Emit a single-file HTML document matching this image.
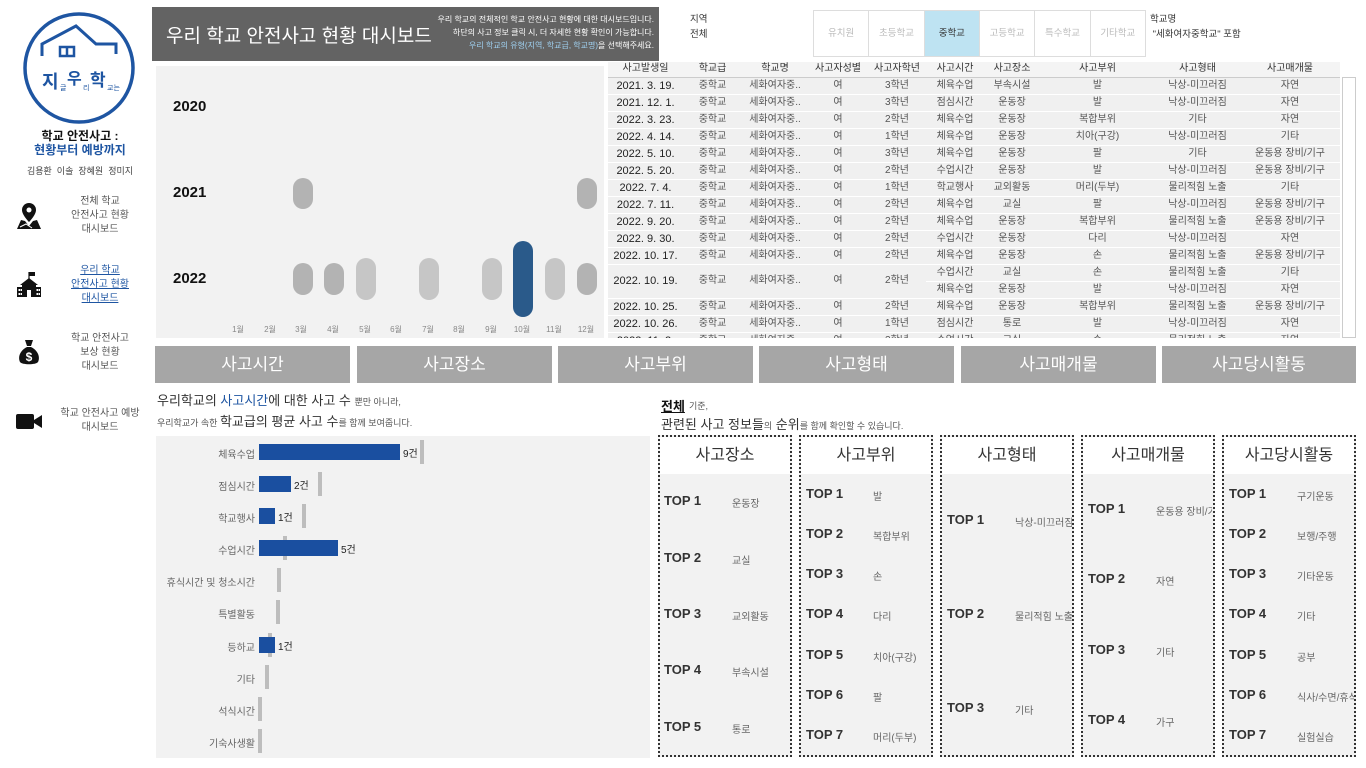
<!DOCTYPE html>
<html><head><meta charset="utf-8">
<style>
*{margin:0;padding:0;box-sizing:border-box}
body{width:1366px;height:768px;background:#fff;position:relative;overflow:hidden;font-family:"Liberation Sans","Noto Sans CJK KR",sans-serif;color:#333}
.a{position:absolute}
.c{text-align:center}
.nav{position:absolute;left:52px;width:96px;text-align:center;font-size:10px;line-height:14px;color:#555}
.tab{position:absolute;top:346px;height:37px;background:#a6a6a6;color:#fff;font-size:17px;line-height:37px;text-align:center}
.pill{position:absolute;width:20px;border-radius:10px}
.mo{position:absolute;top:324px;font-size:8px;color:#888;width:30px;text-align:center}
table{border-collapse:collapse;table-layout:fixed}
td{height:17px;font-size:10px;color:#555;text-align:center;background:#f0f0f0;border-bottom:1px solid #fff;white-space:nowrap;overflow:hidden;padding:0;line-height:16px}
td.d{color:#222;font-size:11px}
th{height:15px;font-size:10px;font-weight:normal;color:#333;background:#f4f4f4;border-bottom:1px solid #ccc;line-height:14px}
.blab{position:absolute;width:100px;left:155px;text-align:right;font-size:10px;color:#666}
.bar{position:absolute;left:259px;height:16px;background:#1a4fa0}
.ref{position:absolute;width:4px;height:24px;background:#bdbdbd}
.cnt{position:absolute;font-size:10px;color:#222}
.box{position:absolute;top:435px;width:134px;height:322px;border:2px dotted #333;background:#f2f2f2}
.box .h{height:37px;background:#fff;text-align:center;font-size:16px;line-height:37px;color:#333}
.t{position:absolute;font-size:13px;font-weight:bold;color:#333}
.v{position:absolute;font-size:10px;color:#666;white-space:nowrap}
</style></head><body>

<!-- Logo -->
<svg class="a" style="left:20px;top:10px" width="120" height="120" viewBox="0 0 120 120">
<circle cx="59" cy="58" r="54" fill="none" stroke="#1e55a2" stroke-width="3.5"/>
<path d="M22 46 L22 34 L56 16 L76 34 L96 34 L96 44" fill="none" stroke="#1e55a2" stroke-width="3"/>
<rect x="40" y="37" width="14" height="9" fill="none" stroke="#1e55a2" stroke-width="2.5"/>
<line x1="47" y1="37" x2="47" y2="46" stroke="#1e55a2" stroke-width="2.5"/>
<text x="22" y="78" font-family="Noto Sans CJK KR" font-weight="bold" font-size="18" fill="#1e55a2">지</text>
<text x="40" y="80" font-family="Noto Sans CJK KR" font-size="7" fill="#1e55a2">글</text>
<text x="47" y="74" font-family="Noto Sans CJK KR" font-weight="bold" font-size="16" fill="#1e55a2">우</text>
<text x="63" y="80" font-family="Noto Sans CJK KR" font-size="7" fill="#1e55a2">리</text>
<text x="70" y="76" font-family="Noto Sans CJK KR" font-weight="bold" font-size="17" fill="#1e55a2">학</text>
<text x="87" y="80" font-family="Noto Sans CJK KR" font-size="7" fill="#1e55a2">교는</text>
</svg>
<div class="a c" style="left:10px;top:127px;width:140px;font-size:12px;font-weight:bold;color:#111">학교 안전사고 :</div>
<div class="a c" style="left:10px;top:141px;width:140px;font-size:12px;font-weight:bold;color:#1e55a2">현황부터 예방까지</div>
<div class="a c" style="left:10px;top:164px;width:140px;font-size:9px;color:#444">김용환 &nbsp;이솔 &nbsp;장혜원 &nbsp;정미지</div>

<!-- nav icons -->
<svg class="a" style="left:16px;top:202px" width="26" height="28" viewBox="0 0 26 28"><path d="M13 1a7 7 0 0 0-7 7c0 5 7 12 7 12s7-7 7-12a7 7 0 0 0-7-7z" fill="#111"/><circle cx="13" cy="8" r="2.5" fill="#fff"/><path d="M1 27 L5 18 L9 19 L13 24 L17 19 L21 18 L25 27 Z" fill="#111"/><path d="M4 25 L10 22 L16 26" stroke="#fff" stroke-width="1" fill="none"/></svg>
<svg class="a" style="left:16px;top:270px" width="26" height="28" viewBox="0 0 26 28"><line x1="13" y1="2" x2="13" y2="10" stroke="#111" stroke-width="1.2"/><rect x="13" y="2" width="6" height="4" fill="#111"/><path d="M4 15 L13 8 L22 15 Z" fill="#111"/><rect x="6" y="14" width="14" height="13" fill="#111"/><rect x="1" y="17" width="6" height="10" fill="#111"/><rect x="19" y="17" width="6" height="10" fill="#111"/><rect x="11" y="20" width="4" height="7" fill="#fff"/><rect x="2.5" y="19" width="1.5" height="2" fill="#fff"/><rect x="4.5" y="19" width="1.5" height="2" fill="#fff"/><rect x="2.5" y="23" width="1.5" height="2" fill="#fff"/><rect x="4.5" y="23" width="1.5" height="2" fill="#fff"/><rect x="20.5" y="19" width="1.5" height="2" fill="#fff"/><rect x="22.5" y="19" width="1.5" height="2" fill="#fff"/><rect x="20.5" y="23" width="1.5" height="2" fill="#fff"/><rect x="22.5" y="23" width="1.5" height="2" fill="#fff"/></svg>
<svg class="a" style="left:17px;top:338px" width="24" height="28" viewBox="0 0 24 28"><path d="M8 2 L16 2 L14 8 L10 8 Z" fill="#111"/><path d="M10 9 C2 13 1 20 3 24 C5 27 19 27 21 24 C23 20 22 13 14 9 Z" fill="#111"/><text x="12" y="23" text-anchor="middle" font-size="12" font-weight="bold" fill="#fff" font-family="Liberation Sans">$</text></svg>
<svg class="a" style="left:15px;top:412px" width="28" height="20" viewBox="0 0 28 20"><rect x="1" y="2" width="18" height="15" rx="2" fill="#111"/><path d="M19 8 L27 3 L27 16 L19 11 Z" fill="#111"/></svg>
<div class="nav" style="top:195px">전체 학교<br>안전사고 현황<br>대시보드</div>
<div class="nav" style="top:264px;color:#1e55a2;text-decoration:underline">우리 학교<br>안전사고 현황<br>대시보드</div>
<div class="nav" style="top:332px">학교 안전사고<br>보상 현황<br>대시보드</div>
<div class="nav" style="top:407px">학교 안전사고 예방<br>대시보드</div>

<!-- header -->
<div class="a" style="left:152px;top:7px;width:507px;height:54px;background:#636363"></div>
<div class="a" style="left:166px;top:21px;font-size:19px;color:#fff;white-space:nowrap">우리 학교 안전사고 현황 대시보드</div>
<div class="a" style="left:430px;top:13px;width:224px;text-align:right;font-size:8px;line-height:13px;color:#fff;white-space:nowrap">우리 학교의 전체적인 학교 안전사고 현황에 대한 대시보드입니다.<br>하단의 사고 정보 클릭 시, 더 자세한 현황 확인이 가능합니다.<br><span style="color:#9fd0f0">우리 학교의 유형(지역, 학교급, 학교명)</span>을 선택해주세요.</div>
<div class="a" style="left:690px;top:12px;font-size:9.5px;line-height:15px;color:#333">지역<br>전체</div>
<div class="a" style="left:813px;top:10px;width:333px;height:47px;border:1px solid #ddd;display:flex">
<div style="flex:1;border-right:1px solid #ddd;font-size:9.5px;color:#bbb;text-align:center;line-height:45px">유치원</div>
<div style="flex:1;border-right:1px solid #ddd;font-size:9.5px;color:#bbb;text-align:center;line-height:45px">초등학교</div>
<div style="flex:1;border-right:1px solid #ddd;font-size:9.5px;color:#333;background:#bee3f2;text-align:center;line-height:45px">중학교</div>
<div style="flex:1;border-right:1px solid #ddd;font-size:9.5px;color:#bbb;text-align:center;line-height:45px">고등학교</div>
<div style="flex:1;border-right:1px solid #ddd;font-size:9.5px;color:#bbb;text-align:center;line-height:45px">특수학교</div>
<div style="flex:1;font-size:9.5px;color:#bbb;text-align:center;line-height:45px">기타학교</div>
</div>
<div class="a" style="left:1150px;top:12px;font-size:9.5px;line-height:15px;color:#333">학교명<br>&nbsp;"세화여자중학교" 포함</div>

<!-- timeline -->
<div class="a" style="left:156px;top:66px;width:448px;height:272px;background:#f2f2f2"></div>
<div class="a" style="left:173px;top:98px;font-size:15px;font-weight:bold;color:#111">2020</div>
<div class="a" style="left:173px;top:184px;font-size:15px;font-weight:bold;color:#111">2021</div>
<div class="a" style="left:173px;top:270px;font-size:15px;font-weight:bold;color:#111">2022</div>
<div class="pill" style="left:293px;top:178px;height:31px;background:#b3b3b3"></div>
<div class="pill" style="left:577px;top:178px;height:31px;background:#b3b3b3"></div>
<div class="pill" style="left:293px;top:263px;height:32px;background:#b3b3b3"></div>
<div class="pill" style="left:324px;top:263px;height:32px;background:#b3b3b3"></div>
<div class="pill" style="left:356px;top:258px;height:42px;background:#c6c6c6"></div>
<div class="pill" style="left:419px;top:258px;height:42px;background:#c6c6c6"></div>
<div class="pill" style="left:482px;top:258px;height:42px;background:#c6c6c6"></div>
<div class="pill" style="left:513px;top:241px;height:76px;background:#2a5a8a"></div>
<div class="pill" style="left:545px;top:258px;height:42px;background:#c6c6c6"></div>
<div class="pill" style="left:577px;top:263px;height:32px;background:#b3b3b3"></div>
<div class="mo" style="left:223px">1월</div><div class="mo" style="left:255px">2월</div><div class="mo" style="left:286px">3월</div><div class="mo" style="left:318px">4월</div><div class="mo" style="left:350px">5월</div><div class="mo" style="left:381px">6월</div><div class="mo" style="left:413px">7월</div><div class="mo" style="left:444px">8월</div><div class="mo" style="left:476px">9월</div><div class="mo" style="left:507px">10월</div><div class="mo" style="left:539px">11월</div><div class="mo" style="left:571px">12월</div>

<!-- table -->
<div class="a" style="left:608px;top:62px;width:732px;height:276px;overflow:hidden">
<table style="width:732px">
<colgroup><col style="width:75px"><col style="width:59px"><col style="width:66px"><col style="width:60px"><col style="width:58px"><col style="width:58px"><col style="width:56px"><col style="width:115px"><col style="width:85px"><col style="width:100px"></colgroup>
<tr><th>사고발생일</th><th>학교급</th><th>학교명</th><th>사고자성별</th><th>사고자학년</th><th>사고시간</th><th>사고장소</th><th>사고부위</th><th>사고형태</th><th>사고매개물</th></tr>
<tr><td class="d">2021. 3. 19.</td><td>중학교</td><td>세화여자중..</td><td>여</td><td>3학년</td><td>체육수업</td><td>부속시설</td><td>발</td><td>낙상-미끄러짐</td><td>자연</td></tr>
<tr><td class="d">2021. 12. 1.</td><td>중학교</td><td>세화여자중..</td><td>여</td><td>3학년</td><td>점심시간</td><td>운동장</td><td>발</td><td>낙상-미끄러짐</td><td>자연</td></tr>
<tr><td class="d">2022. 3. 23.</td><td>중학교</td><td>세화여자중..</td><td>여</td><td>2학년</td><td>체육수업</td><td>운동장</td><td>복합부위</td><td>기타</td><td>자연</td></tr>
<tr><td class="d">2022. 4. 14.</td><td>중학교</td><td>세화여자중..</td><td>여</td><td>1학년</td><td>체육수업</td><td>운동장</td><td>치아(구강)</td><td>낙상-미끄러짐</td><td>기타</td></tr>
<tr><td class="d">2022. 5. 10.</td><td>중학교</td><td>세화여자중..</td><td>여</td><td>3학년</td><td>체육수업</td><td>운동장</td><td>팔</td><td>기타</td><td>운동용 장비/기구</td></tr>
<tr><td class="d">2022. 5. 20.</td><td>중학교</td><td>세화여자중..</td><td>여</td><td>2학년</td><td>수업시간</td><td>운동장</td><td>발</td><td>낙상-미끄러짐</td><td>운동용 장비/기구</td></tr>
<tr><td class="d">2022. 7. 4.</td><td>중학교</td><td>세화여자중..</td><td>여</td><td>1학년</td><td>학교행사</td><td>교외활동</td><td>머리(두부)</td><td>물리적힘 노출</td><td>기타</td></tr>
<tr><td class="d">2022. 7. 11.</td><td>중학교</td><td>세화여자중..</td><td>여</td><td>2학년</td><td>체육수업</td><td>교실</td><td>팔</td><td>낙상-미끄러짐</td><td>운동용 장비/기구</td></tr>
<tr><td class="d">2022. 9. 20.</td><td>중학교</td><td>세화여자중..</td><td>여</td><td>2학년</td><td>체육수업</td><td>운동장</td><td>복합부위</td><td>물리적힘 노출</td><td>운동용 장비/기구</td></tr>
<tr><td class="d">2022. 9. 30.</td><td>중학교</td><td>세화여자중..</td><td>여</td><td>2학년</td><td>수업시간</td><td>운동장</td><td>다리</td><td>낙상-미끄러짐</td><td>자연</td></tr>
<tr><td class="d">2022. 10. 17.</td><td>중학교</td><td>세화여자중..</td><td>여</td><td>2학년</td><td>체육수업</td><td>운동장</td><td>손</td><td>물리적힘 노출</td><td>운동용 장비/기구</td></tr>
<tr><td class="d" rowspan="2">2022. 10. 19.</td><td rowspan="2">중학교</td><td rowspan="2">세화여자중..</td><td rowspan="2">여</td><td rowspan="2">2학년</td><td>수업시간</td><td>교실</td><td>손</td><td>물리적힘 노출</td><td>기타</td></tr>
<tr><td>체육수업</td><td>운동장</td><td>발</td><td>낙상-미끄러짐</td><td>자연</td></tr>
<tr><td class="d">2022. 10. 25.</td><td>중학교</td><td>세화여자중..</td><td>여</td><td>2학년</td><td>체육수업</td><td>운동장</td><td>복합부위</td><td>물리적힘 노출</td><td>운동용 장비/기구</td></tr>
<tr><td class="d">2022. 10. 26.</td><td>중학교</td><td>세화여자중..</td><td>여</td><td>1학년</td><td>점심시간</td><td>통로</td><td>발</td><td>낙상-미끄러짐</td><td>자연</td></tr>
<tr><td class="d">2022. 11. 2.</td><td>중학교</td><td>세화여자중..</td><td>여</td><td>2학년</td><td>수업시간</td><td>교실</td><td>손</td><td>물리적힘 노출</td><td>자연</td></tr>
</table></div>
<div class="a" style="left:1342px;top:77px;width:14px;height:261px;border:1px solid #ccc;background:#fff"></div>

<!-- tabs -->
<div class="tab" style="left:155px;width:195px">사고시간</div>
<div class="tab" style="left:357px;width:195px">사고장소</div>
<div class="tab" style="left:558px;width:195px">사고부위</div>
<div class="tab" style="left:759px;width:195px">사고형태</div>
<div class="tab" style="left:961px;width:195px">사고매개물</div>
<div class="tab" style="left:1162px;width:194px">사고당시활동</div>

<!-- left description -->
<div class="a" style="left:157px;top:390px;font-size:13px;color:#333;white-space:nowrap">우리학교의 <span style="color:#1e55a2">사고시간</span>에 대한 사고 수 <span style="font-size:9px;color:#555">뿐만 아니라,</span></div>
<div class="a" style="left:157px;top:411px;font-size:9px;color:#555;white-space:nowrap">우리학교가 속한 <span style="font-size:13px;color:#333">학교급의 평균 사고 수</span>를 함께 보여줍니다.</div>

<!-- bar chart -->
<div class="a" style="left:156px;top:436px;width:494px;height:322px;background:#f2f2f2"></div>
<div class="blab" style="top:446px">체육수업</div>
<div class="blab" style="top:478px">점심시간</div>
<div class="blab" style="top:510px">학교행사</div>
<div class="blab" style="top:542px">수업시간</div>
<div class="blab" style="top:574px">휴식시간 및 청소시간</div>
<div class="blab" style="top:606px">특별활동</div>
<div class="blab" style="top:639px">등하교</div>
<div class="blab" style="top:671px">기타</div>
<div class="blab" style="top:703px">석식시간</div>
<div class="blab" style="top:735px">기숙사생활</div>
<div class="ref" style="left:420px;top:440px"></div>
<div class="ref" style="left:318px;top:472px"></div>
<div class="ref" style="left:302px;top:504px"></div>
<div class="ref" style="left:283px;top:536px"></div>
<div class="ref" style="left:277px;top:568px"></div>
<div class="ref" style="left:276px;top:600px"></div>
<div class="ref" style="left:268px;top:633px"></div>
<div class="ref" style="left:265px;top:665px"></div>
<div class="ref" style="left:258px;top:697px"></div>
<div class="ref" style="left:258px;top:729px"></div>
<div class="bar" style="top:444px;width:141px"></div><div class="cnt" style="left:403px;top:445px">9건</div>
<div class="bar" style="top:476px;width:32px"></div><div class="cnt" style="left:294px;top:477px">2건</div>
<div class="bar" style="top:508px;width:16px"></div><div class="cnt" style="left:278px;top:509px">1건</div>
<div class="bar" style="top:540px;width:79px"></div><div class="cnt" style="left:341px;top:541px">5건</div>
<div class="bar" style="top:637px;width:16px"></div><div class="cnt" style="left:278px;top:638px">1건</div>

<!-- right description -->
<div class="a" style="left:661px;top:396px;font-size:13px;font-weight:bold;color:#111;text-decoration:underline">전체</div>
<div class="a" style="left:689px;top:399px;font-size:9px;color:#555">기준,</div>
<div class="a" style="left:661px;top:414px;font-size:13px;color:#333;white-space:nowrap">관련된 사고 정보들<span style="font-size:9px;color:#555">의</span> 순위<span style="font-size:9px;color:#555">를 함께 확인할 수 있습니다.</span></div>

<!-- top boxes -->
<div class="box" style="left:658px"><div class="h">사고장소</div></div>
<div class="box" style="left:799px"><div class="h">사고부위</div></div>
<div class="box" style="left:940px"><div class="h">사고형태</div></div>
<div class="box" style="left:1081px"><div class="h">사고매개물</div></div>
<div class="box" style="left:1222px"><div class="h">사고당시활동</div></div>

<div class="t" style="left:664px;top:493px">TOP 1</div><div class="v" style="left:732px;top:495px">운동장</div>
<div class="t" style="left:664px;top:550px">TOP 2</div><div class="v" style="left:732px;top:552px">교실</div>
<div class="t" style="left:664px;top:606px">TOP 3</div><div class="v" style="left:732px;top:608px">교외활동</div>
<div class="t" style="left:664px;top:662px">TOP 4</div><div class="v" style="left:732px;top:664px">부속시설</div>
<div class="t" style="left:664px;top:719px">TOP 5</div><div class="v" style="left:732px;top:721px">통로</div>

<div class="t" style="left:806px;top:486px">TOP 1</div><div class="v" style="left:873px;top:488px">발</div>
<div class="t" style="left:806px;top:526px">TOP 2</div><div class="v" style="left:873px;top:528px">복합부위</div>
<div class="t" style="left:806px;top:566px">TOP 3</div><div class="v" style="left:873px;top:568px">손</div>
<div class="t" style="left:806px;top:606px">TOP 4</div><div class="v" style="left:873px;top:608px">다리</div>
<div class="t" style="left:806px;top:647px">TOP 5</div><div class="v" style="left:873px;top:649px">치아(구강)</div>
<div class="t" style="left:806px;top:687px">TOP 6</div><div class="v" style="left:873px;top:689px">팔</div>
<div class="t" style="left:806px;top:727px">TOP 7</div><div class="v" style="left:873px;top:729px">머리(두부)</div>

<div class="t" style="left:947px;top:512px">TOP 1</div><div class="v" style="left:1015px;top:514px;width:57px;overflow:hidden">낙상-미끄러짐</div>
<div class="t" style="left:947px;top:606px">TOP 2</div><div class="v" style="left:1015px;top:608px;width:57px;overflow:hidden">물리적힘 노출</div>
<div class="t" style="left:947px;top:700px">TOP 3</div><div class="v" style="left:1015px;top:702px">기타</div>

<div class="t" style="left:1088px;top:501px">TOP 1</div><div class="v" style="left:1156px;top:503px;width:56px;overflow:hidden">운동용 장비/기구</div>
<div class="t" style="left:1088px;top:571px">TOP 2</div><div class="v" style="left:1156px;top:573px">자연</div>
<div class="t" style="left:1088px;top:642px">TOP 3</div><div class="v" style="left:1156px;top:644px">기타</div>
<div class="t" style="left:1088px;top:712px">TOP 4</div><div class="v" style="left:1156px;top:714px">가구</div>

<div class="t" style="left:1229px;top:486px">TOP 1</div><div class="v" style="left:1297px;top:488px">구기운동</div>
<div class="t" style="left:1229px;top:526px">TOP 2</div><div class="v" style="left:1297px;top:528px">보행/주행</div>
<div class="t" style="left:1229px;top:566px">TOP 3</div><div class="v" style="left:1297px;top:568px">기타운동</div>
<div class="t" style="left:1229px;top:606px">TOP 4</div><div class="v" style="left:1297px;top:608px">기타</div>
<div class="t" style="left:1229px;top:647px">TOP 5</div><div class="v" style="left:1297px;top:649px">공부</div>
<div class="t" style="left:1229px;top:687px">TOP 6</div><div class="v" style="left:1297px;top:689px;width:57px;overflow:hidden">식사/수면/휴식</div>
<div class="t" style="left:1229px;top:727px">TOP 7</div><div class="v" style="left:1297px;top:729px">실험실습</div>
</body></html>
